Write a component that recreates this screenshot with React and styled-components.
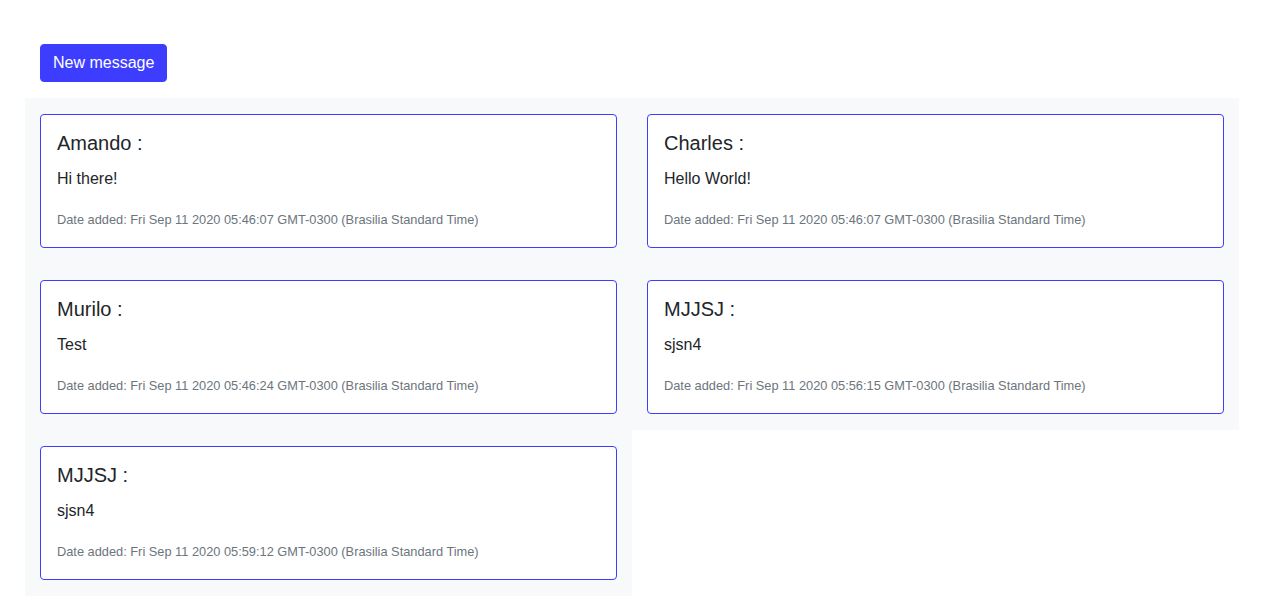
import styled, { createGlobalStyle } from "styled-components";

const GlobalStyle = createGlobalStyle`
    body {
        margin: 0;
        font-family: "Liberation Sans", Arial, sans-serif;
        color: #212529;
        background: #fff;
    }
`;

const Page = styled.div`
    padding: 44px 24px 16px 25px;
`;

const Toolbar = styled.div`
    padding: 0 15px 16px;
`;

const NewButton = styled.button`
    font-family: inherit;
    font-size: 16px;
    line-height: 24px;
    padding: 6px 12px;
    border: 1px solid #3d3dff;
    border-radius: 4px;
    background-color: #3d3dff;
    color: #fff;
    cursor: pointer;
`;

const MessageGrid = styled.div`
    display: flex;
    flex-wrap: wrap;
`;

const Cell = styled.div`
    width: 50%;
    box-sizing: border-box;
    padding: 16px 15px;
    background-color: #f8f9fa;
`;

const Card = styled.div`
    border: 1px solid #3d3dff;
    border-radius: 4px;
    background: #fff;
    padding: 16px 16px 15px;
`;

const Author = styled.h5`
    margin: 0 0 12px;
    font-size: 20px;
    font-weight: 400;
    line-height: 24px;
`;

const Body = styled.p`
    margin: 0 0 16px;
    font-size: 16px;
    line-height: 24px;
`;

const Meta = styled.p`
    margin: 0;
    font-size: 16px;
    line-height: 24px;

    & small {
        font-size: 80%;
        color: #6c757d;
    }
`;

const messages = [
    { name: "Amando", text: "Hi there!", date: "Fri Sep 11 2020 05:46:07 GMT-0300 (Brasilia Standard Time)" },
    { name: "Charles", text: "Hello World!", date: "Fri Sep 11 2020 05:46:07 GMT-0300 (Brasilia Standard Time)" },
    { name: "Murilo", text: "Test", date: "Fri Sep 11 2020 05:46:24 GMT-0300 (Brasilia Standard Time)" },
    { name: "MJJSJ", text: "sjsn4", date: "Fri Sep 11 2020 05:56:15 GMT-0300 (Brasilia Standard Time)" },
    { name: "MJJSJ", text: "sjsn4", date: "Fri Sep 11 2020 05:59:12 GMT-0300 (Brasilia Standard Time)" },
];

function App() {
    return (
        <>
            <GlobalStyle />
            <Page>
                <Toolbar>
                    <NewButton>New message</NewButton>
                </Toolbar>
                <MessageGrid>
                    {messages.map((m, i) => (
                        <Cell key={i}>
                            <Card>
                                <Author>{m.name} :</Author>
                                <Body>{m.text}</Body>
                                <Meta>
                                    <small>Date added: {m.date}</small>
                                </Meta>
                            </Card>
                        </Cell>
                    ))}
                </MessageGrid>
            </Page>
        </>
    );
}

export default App;
